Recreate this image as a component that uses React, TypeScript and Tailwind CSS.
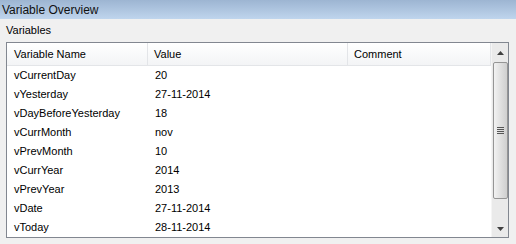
import React from "react";

const rows: [string, string][] = [
  ["vCurrentDay", "20"],
  ["vYesterday", "27-11-2014"],
  ["vDayBeforeYesterday", "18"],
  ["vCurrMonth", "nov"],
  ["vPrevMonth", "10"],
  ["vCurrYear", "2014"],
  ["vPrevYear", "2013"],
  ["vDate", "27-11-2014"],
  ["vToday", "28-11-2014"],
];

export default function App() {
  return (
    <div
      className="w-[516px] h-[244px] bg-[#f0f0f0] text-black overflow-hidden flex flex-col"
      style={{ fontFamily: '"Liberation Sans", Arial, sans-serif' }}
    >
      <div className="h-[19px] bg-gradient-to-b from-[#9db5d2] to-[#bfd5ed] flex items-center pl-[2px] text-[12px] text-[#111] shrink-0">
        Variable Overview
      </div>
      <div className="h-[23px] flex items-end pl-[6px] pb-[4px] text-[11px] shrink-0">Variables</div>
      <div className="ml-[6px] w-[503px] h-[196px] border border-[#828790] bg-white flex">
        <div className="flex-1 flex flex-col min-w-0">
          <div className="h-[23px] flex text-[11px] bg-gradient-to-b from-white to-[#f3f4f6] border-b border-[#e3e5e8] shrink-0">
            <div className="w-[141px] flex items-center pl-[7px] border-r border-[#e3e5e8]">Variable Name</div>
            <div className="w-[200px] flex items-center pl-[6px] border-r border-[#e3e5e8]">Value</div>
            <div className="flex-1 flex items-center pl-[6px] border-r border-[#e3e5e8]">Comment</div>
          </div>
          <div className="flex flex-col">
            {rows.map(([n, v]) => (
              <div key={n} className="h-[19px] flex items-center text-[11px]">
                <div className="w-[141px] pl-[7px]">{n}</div>
                <div className="w-[200px] pl-[7px]">{v}</div>
              </div>
            ))}
          </div>
        </div>
        <div className="w-[17px] bg-[#eaeaea] flex flex-col items-center shrink-0 border-l border-[#f5f5f5]">
          <div className="h-[19px] w-full flex items-center justify-center">
            <svg width="7" height="4" viewBox="0 0 7 4">
              <path d="M3.5 0 L7 4 L0 4 Z" fill="#404040" />
            </svg>
          </div>
          <div className="w-[15px] h-[137px] rounded-[2px] border border-[#959595] bg-gradient-to-r from-[#f2f2f2] via-[#e0e0e0] to-[#cfcfcf] flex items-center justify-center">
            <div className="flex flex-col gap-[1px]">
              <div className="w-[7px] h-[1px] bg-[#555]" />
              <div className="w-[7px] h-[1px] bg-[#555]" />
              <div className="w-[7px] h-[1px] bg-[#555]" />
              <div className="w-[7px] h-[1px] bg-[#555]" />
            </div>
          </div>
          <div className="flex-1" />
          <div className="h-[17px] w-full flex items-center justify-center">
            <svg width="7" height="4" viewBox="0 0 7 4">
              <path d="M0 0 L7 0 L3.5 4 Z" fill="#404040" />
            </svg>
          </div>
        </div>
      </div>
    </div>
  );
}
